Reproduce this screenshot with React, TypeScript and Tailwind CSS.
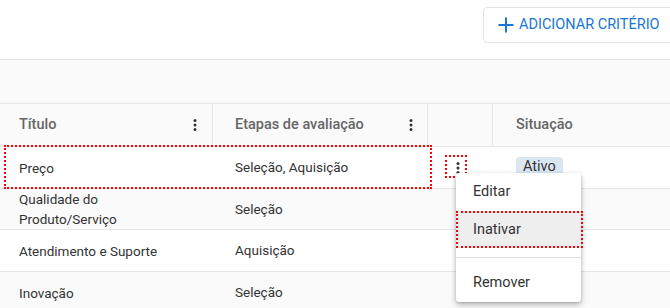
import React from "react";

const Kebab = ({ className = "" }: { className?: string }) => (
  <svg width="4" height="12" viewBox="0 0 4 12" className={className}>
    <circle cx="2" cy="1.6" r="1.5" fill="#333" />
    <circle cx="2" cy="6" r="1.5" fill="#333" />
    <circle cx="2" cy="10.4" r="1.5" fill="#333" />
  </svg>
);

const rows = [
  { t: ["Preço"], e: "Seleção, Aquisição", chip: true, h: "h-[42px]" },
  { t: ["Qualidade do", "Produto/Serviço"], e: "Seleção", h: "h-[41px]" },
  { t: ["Atendimento e Suporte"], e: "Aquisição", h: "h-[42px]" },
  { t: ["Inovação"], e: "Seleção", h: "h-[42px]" },
];

export default function App() {
  return (
    <div
      className="relative w-[670px] h-[308px] overflow-hidden bg-white text-[14px] text-[#333]"
      style={{ fontFamily: "Roboto, 'Liberation Sans', sans-serif" }}
    >
      <div className="h-[59px] flex justify-end items-start pt-[7px]">
        <button className="-mr-[13px] h-[36px] w-[200px] shrink-0 whitespace-nowrap flex items-center gap-[5px] pl-[14px] rounded-[4px] border border-[#e3e3e3] bg-white text-[#1976d2] font-normal text-[14.5px]">
          <svg width="16" height="16" viewBox="0 0 16 16" className="shrink-0">
            <path d="M8 0.5v15M0.5 8h15" stroke="#1976d2" strokeWidth="2" />
          </svg>
          <span>ADICIONAR CRITÉRIO</span>
        </button>
      </div>
      <div className="h-[45px] bg-[#fafafa] border-y border-[#e6e6e6]" />
      <div className="grid grid-cols-[213px_215px_65px_177px] h-[43px] bg-[#fafafa] border-b border-[#e6e6e6] text-[#666] font-medium text-[14.5px]">
        <div className="flex items-center justify-between pl-[19px] pr-[15px] border-r border-[#e6e6e6]">
          <span>Título</span>
          <Kebab />
        </div>
        <div className="flex items-center justify-between pl-[22px] pr-[14px] border-r border-[#e6e6e6]">
          <span>Etapas de avaliação</span>
          <Kebab />
        </div>
        <div className="border-r border-[#e6e6e6]" />
        <div className="flex items-center pl-[23px]">Situação</div>
      </div>
      {rows.map((r, i) => (
        <div
          key={i}
          className={`grid grid-cols-[213px_215px_65px_177px] ${r.h} border-b border-[#e6e6e6] text-[13.5px] ${
            i % 2 === 1 ? "bg-[#fafafa]" : "bg-white"
          }`}
        >
          <div className="flex flex-col justify-center pl-[19px] leading-[20px]">
            {r.t.map((l) => (
              <span key={l}>{l}</span>
            ))}
          </div>
          <div className="flex items-center pl-[22px]">{r.e}</div>
          <div className="flex items-center pl-[28px]">{r.chip ? <Kebab /> : null}</div>
          <div className="flex items-center pl-[23px]">
            {r.chip ? (
              <span className="h-[20px] px-[7px] rounded-[4px] bg-[#dae6f2] leading-[20px] text-[14.5px] -mt-[2px]">Ativo</span>
            ) : null}
          </div>
        </div>
      ))}

      {/* red highlight on row */}
      <div className="absolute left-[4px] top-[145px] w-[428px] h-[44px] border-2 border-dotted border-[#f00]" />
      <div className="absolute left-[445px] top-[155px] w-[22px] h-[23px] border-2 border-dotted border-[#f00]" />

      {/* menu */}
      <div className="absolute left-[456px] top-[173px] w-[125px] h-[129px] bg-white rounded-[3px] shadow-[0_3px_6px_rgba(0,0,0,0.25),0_1px_3px_rgba(0,0,0,0.15)]">
        <div className="h-[38px] flex items-center pl-[17px] text-[14.5px]">Editar</div>
        <div className="relative h-[37px] flex items-center pl-[17px] bg-[#eeeeee] text-[14.5px]">
          Inativar
          <div className="absolute inset-0 -right-[2px] border-2 border-dotted border-[#f00]" />
        </div>
        <div className="h-[9px]" />
        <div className="h-px bg-[#e0e0e0]" />
        <div className="h-[42px] flex items-center pl-[17px] pt-[8px] text-[14.5px]">Remover</div>
      </div>
    </div>
  );
}
